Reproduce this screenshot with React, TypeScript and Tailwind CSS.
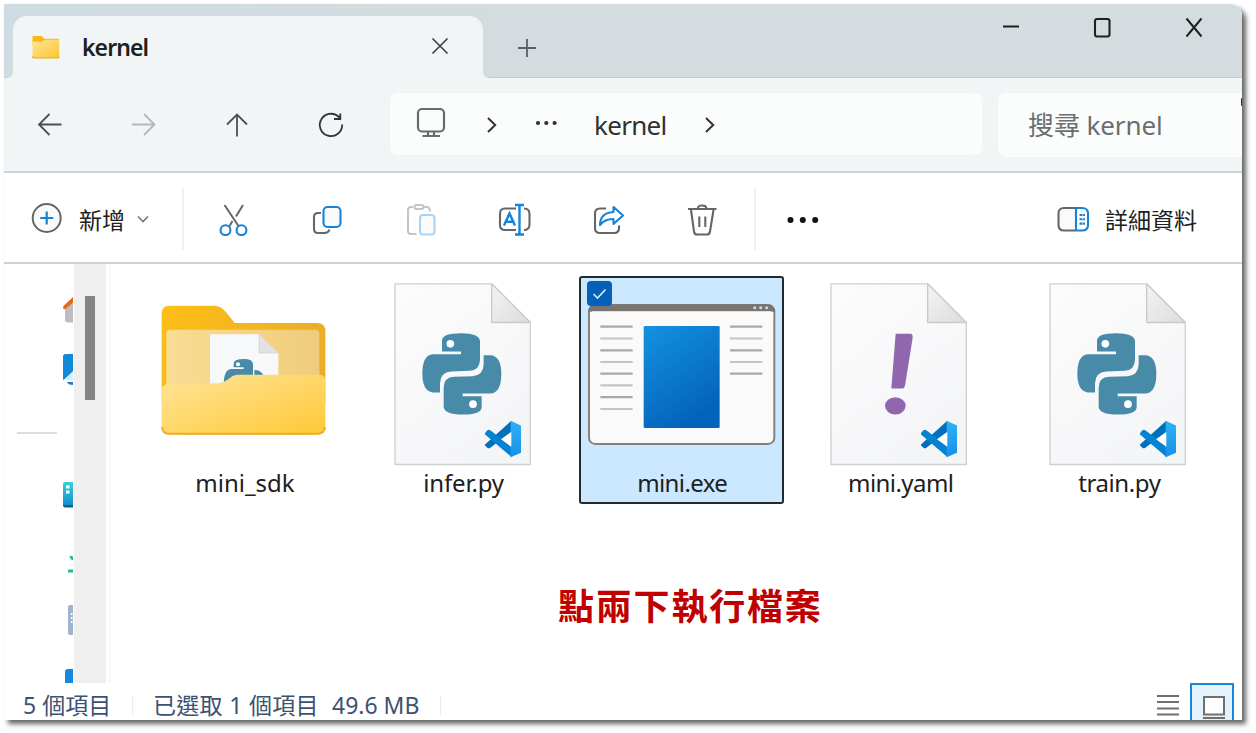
import React from "react";

const latin = "font-['Noto_Sans','Noto_Sans_CJK_TC',sans-serif]";

function SmallFolder() {
  return (
    <svg width="28" height="24" viewBox="0 0 28 24" className="shrink-0">
      <defs>
        <linearGradient id="sf" x1="0" y1="0" x2="1" y2="1">
          <stop offset="0" stopColor="#ffe49a" />
          <stop offset="1" stopColor="#fdc62f" />
        </linearGradient>
      </defs>
      <path d="M0.5 2.2Q.5 1 1.8 1H9.5L12.5 3.8H26Q27 3.8 27 5V10H.5Z" fill="#fbb813" />
      <path d="M.5 6.8H10L12.8 4.8H26Q27.2 4.8 27.2 6V21.6Q27.2 23 26 23H1.8Q.5 23 .5 21.6Z" fill="url(#sf)" />
      <path d="M.5 21.4Q.8 22.9 2 22.9H26Q27 22.9 27.2 21.4" fill="none" stroke="#eeae2c" strokeWidth="1.2" />
    </svg>
  );
}

function TabStrip() {
  return (
    <header className="flex h-[74px] bg-[#f1f5f6]">
      <div className="h-full w-[9px] rounded-br-[7px] border-b border-[#c2cdd3] bg-[#cfdce2]" />
      <div className="flex h-full w-[470px] items-end bg-linear-to-r from-[#cfdce2] to-[#d4dcdf]">
        <div className="flex h-[62px] w-full items-center rounded-t-[14px] bg-[#f1f5f6] pl-[19px]">
          <SmallFolder />
          <span className={`${latin} ml-[22px] w-[66px] text-[23px] font-semibold tracking-[-0.9px] text-[#1f1f1f]`}>kernel</span>
          <svg width="18" height="18" viewBox="0 0 18 18" className="mb-[2px] ml-[283px]" fill="none" stroke="#3c3f40" strokeWidth="1.6">
            <path d="M1.5 1.5 16.5 16.5M16.5 1.5 1.5 16.5" />
          </svg>
        </div>
      </div>
      <div className="flex h-full flex-1 items-start rounded-bl-[7px] border-b border-[#c2cdd3] bg-[#d4dcdf]">
        <svg width="20" height="20" viewBox="0 0 20 20" className="ml-[34px] mt-[34px]" stroke="#5a5f61" strokeWidth="1.8">
          <path d="M10 1V19M1 10H19" />
        </svg>
        <svg width="20" height="20" viewBox="0 0 20 20" className="ml-[465px] mt-[12px]" stroke="#202020" strokeWidth="2">
          <path d="M1 10.5H17" />
        </svg>
        <svg width="20" height="22" viewBox="0 0 20 22" className="ml-[70px] mt-[13px]" fill="none" stroke="#202020" strokeWidth="2.1">
          <rect x="3" y="2" width="14.5" height="17.500" rx="2" />
        </svg>
        <svg width="20" height="22" viewBox="0 0 20 22" className="ml-[72px] mt-[13px]" fill="none" stroke="#202020" strokeWidth="2">
          <path d="M2.500 1.500 17.500 19.500M17.500 1.500 2.500 19.500" />
        </svg>
      </div>
    </header>
  );
}

function NavIcon({ d, color = "#4d5051" }: { d: string; color?: string }) {
  return (
    <svg width="30" height="30" viewBox="0 0 30 30" fill="none" stroke={color} strokeWidth="1.8">
      <path d={d} />
    </svg>
  );
}

function Chevron() {
  return (
    <svg width="12" height="18" viewBox="0 0 12 18" fill="none" stroke="#333" strokeWidth="2" className="shrink-0">
      <path d="M2 2 9.200 9 2 16" />
    </svg>
  );
}

function NavBar() {
  return (
    <nav className="flex h-[95px] border-b-2 border-[#cbd3d8] bg-[#f1f5f6]">
      <div className="flex h-[93px] items-center">
        <div className="flex w-[92px] justify-center"><NavIcon d="M26.500 14.500H4M14.500 4 4 14.500 14.500 25" /></div>
        <div className="flex w-[94px] justify-center"><NavIcon color="#b3b8ba" d="M4 14.500H26.500M16 4 26.500 14.500 16 25" /></div>
        <div className="flex w-[94px] justify-center"><NavIcon d="M15 26.500V4M5 14.500 15 4.500 25 14.500" /></div>
        <div className="flex w-[94px] justify-center"><NavIcon color="#333637" d="M23.800 8A11.200 11.200 0 1 0 26.200 14.500M24.300 3.500V9H18" /></div>
      </div>
      <div className="ml-[12px] mt-[15px] flex h-[62px] w-[592px] items-center rounded-[8px] bg-[#fbfdfd]">
        <svg width="30" height="32" viewBox="0 0 30 32" fill="none" stroke="#686b6c" strokeWidth="2.200" className="mb-[2px] ml-[26px]">
          <rect x="2" y="2" width="26" height="22.500" rx="4" />
          <path d="M12 25V29M18 25V29M6.500 29H24" />
        </svg>
        <span className="ml-[40px] mt-px flex"><Chevron /></span>
        <svg width="24" height="6" viewBox="0 0 24 6" fill="#303030" className="mb-[2px] ml-[37px]">
          <circle cx="3" cy="3" r="2.100" /><circle cx="11.300" cy="3" r="2.100" /><circle cx="19.600" cy="3" r="2.100" />
        </svg>
        <span className={`${latin} ml-[35px] mt-[2px] w-[74px] whitespace-nowrap text-[26px] tracking-[-0.7px] text-[#303030]`}>kernel</span>
        <span className="ml-[36px] mt-px flex"><Chevron /></span>
      </div>
      <div className="ml-[16px] mt-[15px] flex h-[64px] flex-1 items-center rounded-l-[8px] bg-[#fbfdfd]">
        <span className={`${latin} ml-[30px] whitespace-nowrap text-[26px] tracking-[-0.1px] text-[#6b6d6e]`}>搜尋 kernel</span>
        <span className="mb-[46px] ml-auto h-[8px] w-px rounded-l-full bg-[#303030]" />
      </div>
    </nav>
  );
}

const gray = "#666";
const blue = "#1583d8";

function ToolCell({ children }: { children: React.ReactNode }) {
  return (
    <div className="flex w-[93.7px] justify-center">
      <svg width="34" height="34" viewBox="0 0 34 34" fill="none" strokeWidth="2.100">{children}</svg>
    </div>
  );
}

function Toolbar() {
  return (
    <div className="flex h-[91px] items-center border-b-2 border-[#cbd3d8] bg-white pt-[3px]">
      <svg width="32" height="32" viewBox="0 0 32 32" fill="none" className="mb-[2px] ml-[27px]">
        <circle cx="15.700" cy="16" r="14" stroke={gray} strokeWidth="2" fill="#fafafa" />
        <path d="M15.700 9.500V22.500M9.200 16H22.200" stroke={blue} strokeWidth="2.200" />
      </svg>
      <span className={`${latin} ml-[16px] mt-[2px] w-[48px] whitespace-nowrap text-[23px] text-[#202020]`}>新增</span>
      <svg width="14" height="9" viewBox="0 0 14 9" fill="none" stroke="#777" strokeWidth="1.600" className="ml-[9px]">
        <path d="M2 1.500 7 6.500 12 1.500" />
      </svg>
      <div className="ml-[32px] h-[62px] w-[2px] bg-[#f0f0f0]" />
      <div className="ml-[3px] flex pb-px">
        <ToolCell>
          <path d="M7.500 3 21.500 24M26 3 19 14.500M15.500 19 12.500 24" stroke={gray} strokeWidth="2" />
          <circle cx="8.500" cy="28.200" r="4.900" stroke={blue} /><circle cx="24.500" cy="28.200" r="4.900" stroke={blue} />
        </ToolCell>
        <ToolCell>
          <path d="M10 11H7Q3 11 3 15V27Q3 31 7 31H13Q17.500 31 18.500 27.500" stroke={gray} />
          <rect x="12.500" y="5" width="17" height="20" rx="4" stroke={blue} fill="#fafafa" />
        </ToolCell>
        <ToolCell>
          <path d="M9 5H6.500Q4 5 4 8.500V29Q4 32 7 32H12.500M20 5H23Q26 5.500 26 9.500" stroke="#c5c5c5" />
          <rect x="10.500" y="3" width="9" height="4" rx="2" stroke="#c5c5c5" />
          <rect x="16" y="13" width="14.500" height="19.500" rx="3" stroke="#abd4f4" fill="#fafafa" />
        </ToolCell>
        <ToolCell>
          <path d="M18 6.500H7Q2 6.500 2 11.500V23Q2 28 7 28H18M26 6.500Q31.500 6.500 31.500 12V22.500Q31.500 28 26 28" stroke={gray} />
          <path d="M6 23.500 11.500 11.500 17 23.500M8 19.800H15M21.500 3V32.500M17 3H26M17 32.500H26" stroke={blue} strokeWidth="2.400" />
        </ToolCell>
        <ToolCell>
          <path d="M14 6.500H8Q3 6.500 3 11.500V26Q3 31 8 31H22Q27 31 27 26V23.500" stroke={gray} />
          <path d="M21.500 5 31 13.500 21.500 22V17Q12.500 17 8 23Q8 11 21.500 10Z" stroke={blue} strokeLinejoin="round" />
        </ToolCell>
        <ToolCell>
          <path d="M3 7H31.500M13 6Q13 3.500 17.200 3.500Q21 3.500 21.500 6M6 8 9 29.500Q9.500 32.500 12 32.500H22Q24.500 32.500 25 29.500L28.500 8M14.300 14.500V25M20.300 14.500V25" stroke={gray} />
        </ToolCell>
      </div>
      <div className="ml-[5px] h-[62px] w-[1.5px] bg-[#f0f0f0]" />
      <svg width="32" height="8" viewBox="0 0 32 8" fill="#111" className="ml-[31px] mt-[2px]">
        <circle cx="3.500" cy="4" r="3" /><circle cx="15.800" cy="4" r="3" /><circle cx="28.200" cy="4" r="3" />
      </svg>
      <svg width="34" height="28" viewBox="0 0 34 28" fill="none" strokeWidth="2.100" className="ml-auto">
        <path d="M19 3H8Q2.500 3 2.500 8.500V20Q2.500 25.500 8 25.500H19" stroke={gray} fill="#fafafa" />
        <path d="M20 3H26Q32 3 32 8.500V20Q32 25.500 26 25.500H20Z" stroke={blue} />
        <path d="M23.500 10H29M23.500 14.300H29M23.500 18.600H29" stroke={blue} strokeDasharray="3 .6" />
      </svg>
      <span className={`${latin} ml-[15px] mr-[45px] mt-[3px] whitespace-nowrap text-[23px] text-[#202020]`}>詳細資料</span>
    </div>
  );
}

function Sidebar() {
  return (
    <aside className="flex w-[106px] border-r border-[#f3f3f3]">
      <div className="flex w-[70px] flex-col items-end pr-px">
        <svg width="11" height="28" viewBox="0 0 11 28" className="mt-[32px]">
          <path d="M3 12 11 5.500V26.500H6Q3 26.500 3 23.500Z" fill="#bdbdbd" />
          <path d="M1.300 12.500Q.5 11 2 9.500L11 1V6.500L4 12.500Q2 14 1.300 12.500Z" fill="#e8680f" />
        </svg>
        <svg width="11" height="32" viewBox="0 0 11 32" className="mt-[29px]">
          <path d="M3.500 1H11V19L1.500 27Q1 27 1 25V3.500Q1 1 3.500 1Z" fill="#118bd9" />
          <path d="M2 27 11 18V27Z" fill="#d4ecfb" />
          <path d="M5 29H11V32Q6 32 5 29Z" fill="#2878c8" />
        </svg>
        <div className="mr-[16px] mt-[47px] h-[2px] w-[40px] bg-[#dcdcdc]" />
        <svg width="10" height="26" viewBox="0 0 10 26" className="mt-[48px]">
          <defs>
            <linearGradient id="bd" x1="0" y1="0" x2="0" y2="1">
              <stop offset="0" stopColor="#33d3d8" /><stop offset="1" stopColor="#1488cc" />
            </linearGradient>
          </defs>
          <path d="M0 1.500Q0 0 2 0H10V25H2Q0 25 0 23Z" fill="url(#bd)" />
          <path d="M0 23H10V25.500H2Q0 25 0 23Z" fill="#086388" />
          <path d="M3 3.500H6.500V6.500H3ZM3 8.500H6.500V11.500H3Z" fill="#fff" />
        </svg>
        <svg width="6" height="20" viewBox="0 0 6 20" className="mt-[46px]" fill="#27bd89">
          <path d="M2.500 2.500Q3 1 6 2.500V6.500Q2.500 4.500 2.500 2.500ZM1 16.500Q1 15.500 2 15.500H6V18.500H1Z" />
        </svg>
        <svg width="5" height="32" viewBox="0 0 5 32" className="mt-[30px]">
          <path d="M0 3Q0 1 2 1H5V31H2Q0 31 0 29Z" fill="#a0b4ce" />
          <path d="M3.700 9V21" stroke="#fff" strokeWidth="1.600" strokeDasharray="2 2" />
        </svg>
        <svg width="8" height="15" viewBox="0 0 8 15" className="mt-[32px]">
          <path d="M0 4Q0 1 3 1H8V15H0Z" fill="#118bd9" />
        </svg>
      </div>
      <div className="w-[32px] bg-[#efefef] pt-[32px]">
        <div className="ml-[11px] h-[104px] w-[10px] bg-[#858585]" />
      </div>
    </aside>
  );
}

const pyHalf =
  "M183 212Q184 190 240 190Q296 190 297 214V270Q296 302 266 303L210 305Q178 308 177 340V368H155Q124 364 124 312Q124 256 155 253H240V245H183Z";

function PythonMark() {
  return (
    <g fill="#488ba8">
      <path d={pyHalf} />
      <path d={pyHalf} transform="rotate(180 242.5 312)" />
      <circle cx="208" cy="222" r="11.500" fill="#fff" />
      <circle cx="276" cy="403" r="11.500" fill="#fff" />
    </g>
  );
}

function Page({ kind }: { kind: "py" | "yaml" }) {
  return (
    <svg width="138" height="183" viewBox="39 39.5 414 549" className="shrink-0">
      <defs>
        <linearGradient id="pg" x1="0" y1="0" x2=".6" y2="1">
          <stop offset="0" stopColor="#fcfcfc" /><stop offset="1" stopColor="#f4f5f7" />
        </linearGradient>
        <linearGradient id="fold" x1="0" y1="0" x2="1" y2="1">
          <stop offset="0" stopColor="#f4f4f4" /><stop offset="1" stopColor="#dcdcdc" />
        </linearGradient>
        <linearGradient id="vs" x1="0" y1="0" x2="0" y2="1">
          <stop offset="0" stopColor="#2eb2f4" /><stop offset="1" stopColor="#1890ea" />
        </linearGradient>
      </defs>
      <path d="M42 42H332L448 158V584H42Z" fill="url(#pg)" stroke="#d0d0d0" strokeWidth="4" />
      <path d="M332 42 448 158H332Z" fill="url(#fold)" stroke="#cacaca" strokeWidth="4" strokeLinejoin="round" />
      {kind === "py" ? (
        <PythonMark />
      ) : (
        <g fill="#9067ae">
          <path d="M236 192H280Q288 192 287 204L264 348Q262 356 256 356H223Z" />
          <ellipse cx="235" cy="408" rx="31" ry="26" />
        </g>
      )}
      <path d="M312 524 391 453V486L328 534Q323 537 319 534L313 528Q311 526 312 524Z" fill="#0070bb" />
      <path d="M312 490 319 481Q323 478 328 481L392 531V562L313 495Q311 492 312 490Z" fill="#0583d2" />
      <path d="M389 453 420 467V549L389 562Z" fill="url(#vs)" />
      <path d="M391 487V531L360 508.500Z" fill="#fff" />
    </svg>
  );
}

function BigFolder() {
  return (
    <svg width="166" height="133" viewBox="34 104 498 399" className="shrink-0">
      <defs>
        <linearGradient id="fb" x1="0" y1="0" x2="1" y2=".4">
          <stop offset="0" stopColor="#febf17" /><stop offset="1" stopColor="#eaad25" />
        </linearGradient>
        <linearGradient id="fi" x1="0" y1="0" x2="1" y2="0">
          <stop offset="0" stopColor="#f9dd93" /><stop offset="1" stopColor="#efcc7d" />
        </linearGradient>
        <linearGradient id="ff" x1="0" y1="0" x2="1" y2="1">
          <stop offset="0" stopColor="#ffe49a" /><stop offset="1" stopColor="#ffc936" />
        </linearGradient>
      </defs>
      <path d="M36 130Q36 106 58 106H194Q214 106 228 124L255 158H502Q527 158 527 182V400H36Z" fill="url(#fb)" />
      <path d="M50 190Q50 178 62 178H497Q509 178 509 190V360H50Z" fill="url(#fi)" />
      <path d="M181 192H328L386 248V350H181Z" fill="#f7f8fa" />
      <path d="M328 192 386 248H328Z" fill="#e2e2e2" stroke="#cecece" strokeWidth="2" />
      <path d="M252 291V280Q252 266 282 266Q310 266 310 282V316H342Q335 299 314 299V345H222Q222 298 244 296H282V291Z" fill="#488ba8" />
      <circle cx="265" cy="282" r="6" fill="#fff" />
      <path d="M36 362Q36 342 56 341L206 339Q220 338 232 329L248 318Q254 313 264 313H510Q527 314 527 332V470Q527 493 504 493H59Q36 493 36 470Z" fill="url(#ff)" />
      <path d="M37 470Q38 490 59 490H504Q524 490 526 470" fill="none" stroke="#e9ae31" strokeWidth="6" />
    </svg>
  );
}

function AppWindow() {
  const rows = [185, 220.5, 256, 291, 326, 361, 396.5, 432];
  return (
    <svg width="188" height="142" viewBox="51 117 564 426" className="shrink-0">
      <defs>
        <linearGradient id="ex" x1="0" y1="0" x2=".5" y2="1">
          <stop offset="0" stopColor="#1492e0" /><stop offset="1" stopColor="#0363bb" />
        </linearGradient>
      </defs>
      <rect x="54" y="120" width="556" height="417" rx="19" fill="#fafafa" stroke="#84817e" strokeWidth="6" />
      <path d="M52 140Q54 118 74 118H590Q611 120 612 140Z" fill="#777471" />
      <path d="M57 150Q57 139 68 139H596Q607 139 607 150Z" fill="#fafafa" />
      <g fill="#d8d8d8">
        <circle cx="551" cy="128" r="4.500" /><circle cx="569" cy="128" r="4.500" /><circle cx="587" cy="128" r="4.500" />
      </g>
      <g strokeWidth="6.500">
        {rows.map((y, i) => (
          <path key={y} d={`M88 ${y}H185`} stroke={i % 2 ? "#c4c4c4" : "#a8a8a8"} />
        ))}
        {rows.slice(0, 5).map((y, i) => (
          <path key={y} d={`M477 ${y}H574`} stroke={i % 2 ? "#c4c4c4" : "#a8a8a8"} />
        ))}
      </g>
      <rect x="218" y="183" width="228" height="306" rx="4" fill="url(#ex)" />
    </svg>
  );
}

interface TileProps {
  name: string;
  tracking: string;
  selected?: boolean;
  children: React.ReactNode;
}

function FileTile({ name, tracking, selected, children }: TileProps) {
  return (
    <div
      className={`relative flex h-[228px] w-[205px] flex-col items-center rounded-[3px] border-2 ${
        selected ? "border-[#1f2a33] bg-[#cce8ff]" : "border-transparent"
      }`}
    >
      {selected && (
        <span className="absolute left-[6px] top-[3px] flex h-[25px] w-[25px] items-center justify-center rounded-[4px] bg-[#0560b8]">
          <svg width="15" height="12" viewBox="0 0 15 12" fill="none" stroke="#d9ebfa" strokeWidth="1.600">
            <path d="M1.500 6 5.500 10 13.500 1.500" />
          </svg>
        </span>
      )}
      <div className="flex h-[189px] w-full justify-center">{children}</div>
      <span className={`${latin} ${tracking} ml-px whitespace-nowrap text-[24px] leading-[32px] text-[#202020]`}>{name}</span>
    </div>
  );
}

function Files() {
  return (
    <main className="flex-1 pl-[32px] pt-[12px]">
      <div className="flex gap-[13.6px]">
        <FileTile name="mini_sdk" tracking="tracking-normal"><div className="-ml-px pt-[27px]"><BigFolder /></div></FileTile>
        <FileTile name="infer.py" tracking="tracking-[-0.15px]"><div className="-ml-px pt-[5px]"><Page kind="py" /></div></FileTile>
        <FileTile name="mini.exe" tracking="tracking-[-0.6px]" selected><div className="pt-[26px]"><AppWindow /></div></FileTile>
        <FileTile name="mini.yaml" tracking="tracking-[-0.55px]"><div className="-ml-[2px] pt-[5px]"><Page kind="yaml" /></div></FileTile>
        <FileTile name="train.py" tracking="tracking-[-0.4px]"><div className="-ml-px pt-[5px]"><Page kind="py" /></div></FileTile>
      </div>
      <p className="ml-[416px] mt-[72px] whitespace-nowrap font-['Noto_Sans_CJK_TC',sans-serif] text-[36px] font-bold leading-[56px] tracking-[1.8px] text-[#c00000]">
        點兩下執行檔案
      </p>
    </main>
  );
}

function StatusBar() {
  return (
    <footer className={`${latin} flex h-[37px] items-start text-[23px] leading-[30px] text-[#3d5273]`}>
      <span className="ml-[19px] mt-[7px] w-[90px] whitespace-nowrap">5 個項目</span>
      <span className="ml-[19px] mt-[13px] h-[20px] w-px bg-[#ececec]" />
      <span className="ml-[20px] mt-[7px] w-[166px] whitespace-nowrap tracking-[0.3px]">已選取 1 個項目</span>
      <span className="ml-[13px] mt-[7px] w-[90px] whitespace-nowrap">49.6 MB</span>
      <span className="ml-[18px] mt-[13px] h-[20px] w-px bg-[#ececec]" />
      <svg width="24" height="24" viewBox="0 0 24 24" className="ml-auto mt-[10px]" stroke="#707070" strokeWidth="2">
        <path d="M1 3H23M1 9H23M1 15.500H23M1 21.500H23" />
      </svg>
      <div className="ml-[10px] mr-[8px] flex h-[38px] w-[44px] justify-center border-2 border-b-0 border-[#1b86d8] bg-[#e4f2fb] pl-[3px] pt-[10px]">
        <svg width="24" height="25" viewBox="0 0 24 25" fill="none" stroke="#707070" strokeWidth="2">
          <rect x="2" y="2" width="20" height="17.500" fill="#fdfdfd" /><path d="M1 23H23" />
        </svg>
      </div>
    </footer>
  );
}

export default function App() {
  return (
    <div className="h-[733px] w-[1256px] overflow-hidden bg-white pl-[4px] pt-[4px]">
      <div className="h-[716px] w-[1238px] rounded-tr-[12px] shadow-[4px_4px_5px_rgba(0,0,0,0.6)]">
        <div className="flex h-full flex-col overflow-hidden rounded-tr-[12px] bg-white">
          <TabStrip />
          <NavBar />
          <Toolbar />
          <div className="flex h-[419px]">
            <Sidebar />
            <Files />
          </div>
          <StatusBar />
        </div>
      </div>
    </div>
  );
}
